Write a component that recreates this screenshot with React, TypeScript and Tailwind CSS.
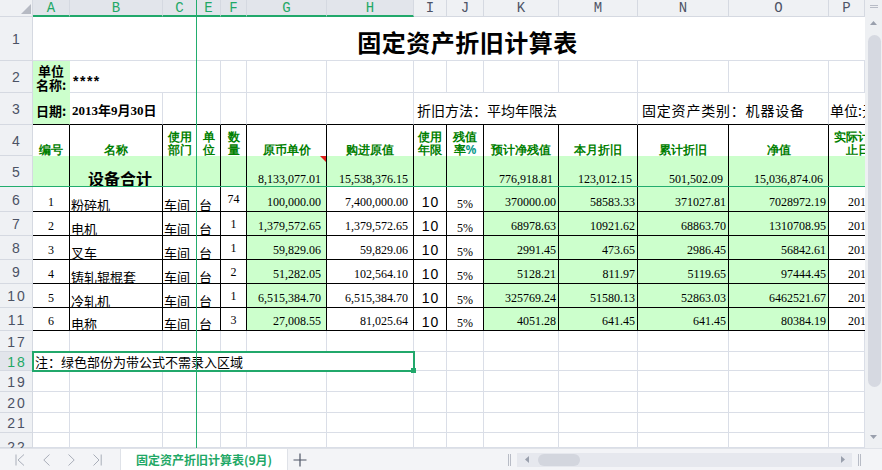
import React from 'react';

// grid line / table border presets
const G = 'border-r border-b border-[#dadee7]';
const B = 'border-r border-b border-black';
const GREEN = 'bg-[#ccffcc]';
const CJK = "font-['Noto_Sans_CJK_SC',sans-serif]";
const SERIF = "font-['Liberation_Serif','Noto_Sans_CJK_SC',serif]";
const NUM = `${SERIF} text-[12px] leading-none text-black`;
const HEAD = 'font-bold text-[#008000] text-[12px] leading-[13px]';

const letters = ['A', 'B', 'C', 'E', 'F', 'G', 'H', 'I', 'J', 'K', 'M', 'N', 'O', 'P'];
const selectedCols = ['A', 'B', 'C', 'E', 'F', 'G', 'H'];

const assets = [
  { no: '1', name: '粉碎机', qty: '74', price: '100,000.00', total: '7,400,000.00', resid: '370000.00', month: '58583.33', acc: '371027.81', net: '7028972.19' },
  { no: '2', name: '电机', qty: '1', price: '1,379,572.65', total: '1,379,572.65', resid: '68978.63', month: '10921.62', acc: '68863.70', net: '1310708.95' },
  { no: '3', name: '叉车', qty: '1', price: '59,829.06', total: '59,829.06', resid: '2991.45', month: '473.65', acc: '2986.45', net: '56842.61' },
  { no: '4', name: '铸轧辊棍套', qty: '2', price: '51,282.05', total: '102,564.10', resid: '5128.21', month: '811.97', acc: '5119.65', net: '97444.45' },
  { no: '5', name: '冷轧机', qty: '1', price: '6,515,384.70', total: '6,515,384.70', resid: '325769.24', month: '51580.13', acc: '52863.03', net: '6462521.67' },
  { no: '6', name: '电称', qty: '3', price: '27,008.55', total: '81,025.64', resid: '4051.28', month: '641.45', acc: '641.45', net: '80384.19' },
];

function ColHead({ l }: { l: string }) {
  const sel = selectedCols.includes(l);
  return (
    <div
      className={`flex items-center justify-center border-r border-[#d5d9e1] font-['Liberation_Mono',monospace] text-[14px] leading-none ${
        sel
          ? 'bg-[#e2e5eb] text-[#1fa866] border-b-2 border-b-[#21a86b]'
          : 'bg-[#eff1f4] text-[#4d5366] border-b border-b-[#d5d9e1]'
      }`}
    >
      {l}
    </div>
  );
}

function RowHead({ n, sel = false, top = false }: { n: string; sel?: boolean; top?: boolean }) {
  return (
    <div
      className={`flex justify-center border-r border-b border-[#d5d9e1] font-['Liberation_Sans',sans-serif] text-[14px] leading-none tracking-[2px] pl-[2px] ${
        top ? 'items-start pt-[7px]' : 'items-center pt-[1px]'
      } ${sel ? 'bg-[#e2e5eb] text-[#1fa866]' : 'bg-[#eff1f4] text-[#4b5264]'}`}
    >
      {n}
    </div>
  );
}

function EmptyRow({ n, top = false }: { n: string; top?: boolean }) {
  return (
    <>
      <RowHead n={n} top={top} />
      {letters.map((l) => (
        <div key={l} className={G} />
      ))}
    </>
  );
}

function Header2({ a, b, cls = '' }: { a: string; b: string; cls?: string }) {
  return (
    <div className={`border-r border-black flex flex-col items-center justify-end ${HEAD} ${cls}`}>
      <div>{a}</div>
      <div>{b}</div>
    </div>
  );
}

function Header1({ t }: { t: string }) {
  return <div className={`border-r border-black flex items-end justify-center ${HEAD}`}>{t}</div>;
}

function Sheet() {
  return (
    <div className="relative w-[865px] h-[448px] overflow-hidden bg-white">
      <div className="grid grid-cols-[33px_37px_93px_34px_24px_26px_80px_87px_33px_37px_75px_79px_91px_100px_36px] grid-rows-[17px_44px_32px_32px_31px_31px_25px_24px_24px_24px_24px_23px_21px_19px_21px_21px_20px_15px]">
        {/* column header */}
        <div className="relative bg-[#eff1f4] border-r border-b border-[#d5d9e1]">
          <svg className="absolute left-[21px] top-[4px]" width="10" height="10" viewBox="0 0 10 10">
            <polygon points="10,0 10,10 0,10" fill="#b6bac3" />
          </svg>
        </div>
        {letters.map((l) => (
          <ColHead key={l} l={l} />
        ))}

        {/* row 1 - title */}
        <RowHead n="1" />
        <div className={`col-span-14 border-b border-[#dadee7] flex items-end justify-center pl-[37px] pb-[6px] ${CJK} font-bold text-[24px] leading-none tracking-[0.5px] text-black`}>
          固定资产折旧计算表
        </div>

        {/* row 2 */}
        <RowHead n="2" />
        <div className={`${GREEN} border-r border-b border-transparent flex flex-col items-center justify-end ${CJK} font-bold text-[13px] leading-[14px]`}>
          <div>单位</div>
          <div>名称:</div>
        </div>
        <div className={`col-span-2 ${G} flex items-center pl-[3px] pt-[9px] font-['Liberation_Sans',sans-serif] font-bold text-[14px] leading-none tracking-[1.5px]`}>
          ****
        </div>
        {letters.slice(3).map((l) => (
          <div key={l} className={G} />
        ))}

        {/* row 3 */}
        <RowHead n="3" />
        <div className={`${GREEN} border-r border-b border-r-transparent border-b-black flex items-center justify-center pt-[4px] ${CJK} font-bold text-[13px] leading-none`}>
          日期:
        </div>
        <div className={`border-r border-b border-[#dadee7] border-b-black flex items-center pl-[2px] pt-[4px] ${SERIF} font-bold text-[13px] leading-none whitespace-nowrap`}>
          2013年9月30日
        </div>
        {['C', 'E', 'F', 'G', 'H'].map((l) => (
          <div key={l} className="border-r border-b border-[#dadee7] border-b-black" />
        ))}
        <div className={`col-span-4 border-r border-b border-[#dadee7] border-b-black flex items-center pl-[3px] pt-[3px] ${CJK} text-[14px] leading-none whitespace-nowrap`}>
          折旧方法：平均年限法
        </div>
        <div className={`col-span-2 border-r border-b border-[#dadee7] border-b-black flex items-center pl-[4px] pt-[3px] ${CJK} text-[14px] leading-none tracking-[0.8px] whitespace-nowrap`}>
          固定资产类别：机器设备
        </div>
        <div className={`border-b border-black flex items-center pl-[1px] pt-[3px] ${CJK} text-[14px] leading-none whitespace-nowrap overflow-hidden`}>
          单位:元
        </div>

        {/* row 4 - headings */}
        <RowHead n="4" />
        <Header1 t="编号" />
        <Header1 t="名称" />
        <Header2 a="使用" b="部门" />
        <Header2 a="单" b="位" />
        <Header2 a="数" b="量" />
        <Header1 t="原币单价" />
        <Header1 t="购进原值" />
        <Header2 a="使用" b="年限" />
        <div className={`border-r border-black flex flex-col items-center justify-end ${HEAD}`}>
          <div>残值</div>
          <div>
            率<span className="text-[#0a9a8a]">%</span>
          </div>
        </div>
        <Header1 t="预计净残值" />
        <Header1 t="本月折旧" />
        <Header1 t="累计折旧" />
        <Header1 t="净值" />
        <div className="overflow-hidden">
          <div className={`w-[58px] h-full flex flex-col items-center justify-end ${HEAD}`}>
            <div className="whitespace-nowrap">实际计提</div>
            <div className="whitespace-nowrap">止日</div>
          </div>
        </div>

        {/* row 5 - totals */}
        <RowHead n="5" />
        <div className={`${B} ${GREEN}`} />
        <div className={`${B} ${GREEN} flex items-end justify-center pl-[8px] ${CJK} font-bold text-[16px] leading-none`}>设备合计</div>
        <div className={`${B} ${GREEN}`} />
        <div className={`${B} ${GREEN}`} />
        <div className={`${B} ${GREEN}`} />
        <div className={`${B} ${GREEN} relative flex items-end justify-end pr-[5px] pb-[1px] ${NUM}`}>
          8,133,077.01
          <svg className="absolute right-0 top-0" width="6" height="6" viewBox="0 0 6 6">
            <polygon points="0,0 6,0 6,6" fill="#e0201c" />
          </svg>
        </div>
        <div className={`${B} ${GREEN} flex items-end justify-end pr-[5px] pb-[1px] ${NUM}`}>15,538,376.15</div>
        <div className={`${B} ${GREEN}`} />
        <div className={`${B} ${GREEN}`} />
        <div className={`${B} ${GREEN} flex items-end justify-end pr-[5px] pb-[1px] ${NUM}`}>776,918.81</div>
        <div className={`${B} ${GREEN} flex items-end justify-end pr-[5px] pb-[1px] ${NUM}`}>123,012.15</div>
        <div className={`${B} ${GREEN} flex items-end justify-end pr-[5px] pb-[1px] ${NUM}`}>501,502.09</div>
        <div className={`${B} ${GREEN} flex items-end justify-end pr-[5px] pb-[1px] ${NUM}`}>15,036,874.06</div>
        <div className={`border-b border-black ${GREEN}`} />

        {/* rows 6-11 - assets */}
        {assets.map((r, i) => (
          <React.Fragment key={r.no}>
            <RowHead n={String(6 + i)} />
            <div className={`${B} flex items-end justify-center pb-[3px] ${NUM}`}>{r.no}</div>
            <div className={`${B} flex items-end pl-[1px] ${CJK} text-[13px] leading-none whitespace-nowrap`}>{r.name}</div>
            <div className={`${B} flex items-end pl-[1px] ${CJK} text-[13px] leading-none`}>车间</div>
            <div className={`${B} flex items-end pl-[2px] ${CJK} text-[13px] leading-none`}>台</div>
            <div className={`${B} flex items-start justify-center pt-[6px] ${NUM}`}>{r.qty}</div>
            <div className={`${B} ${GREEN} flex items-end justify-end pr-[5px] pb-[3px] ${NUM}`}>{r.price}</div>
            <div className={`${B} flex items-end justify-end pr-[5px] pb-[3px] ${NUM}`}>{r.total}</div>
            <div className={`${B} flex items-center justify-center pt-[5px] font-['Liberation_Sans',sans-serif] text-[14px] leading-none tracking-[1px] pl-[1px]`}>10</div>
            <div className={`${B} flex items-end justify-center pb-[1px] ${NUM}`}>5%</div>
            <div className={`${B} ${GREEN} flex items-end justify-end pr-[2px] pb-[3px] ${NUM}`}>{r.resid}</div>
            <div className={`${B} ${GREEN} flex items-end justify-end pr-[2px] pb-[3px] ${NUM}`}>{r.month}</div>
            <div className={`${B} ${GREEN} flex items-end justify-end pr-[2px] pb-[3px] ${NUM}`}>{r.acc}</div>
            <div className={`${B} ${GREEN} flex items-end justify-end pr-[2px] pb-[3px] ${NUM}`}>{r.net}</div>
            <div className={`border-b border-black flex items-end overflow-hidden whitespace-nowrap pl-[19px] pb-[3px] ${NUM}`}>2013-09-30</div>
          </React.Fragment>
        ))}

        <EmptyRow n="17" />

        {/* row 18 - note, selected */}
        <RowHead n="18" sel />
        <div className={`col-span-7 ${G} relative flex items-center pl-[2px] pt-[1px] ${CJK} text-[13px] leading-none whitespace-nowrap`}>
          注：绿色部份为带公式不需录入区域
          <div className="absolute left-[-1px] top-[-1px] right-[-2px] bottom-[-2px] border-2 border-[#21a86b]">
            <div className="absolute right-[-3px] bottom-[-3px] w-[5px] h-[5px] bg-[#21a86b]" />
          </div>
        </div>
        {letters.slice(7).map((l) => (
          <div key={l} className={G} />
        ))}

        <EmptyRow n="19" />
        <EmptyRow n="20" />
        <EmptyRow n="21" />
        <EmptyRow n="22" top />
      </div>

      {/* frozen pane lines */}
      <div className="absolute left-[196px] top-0 bottom-0 w-px bg-[#22ad6e]" />
      <div className="absolute top-[186px] left-0 right-0 h-px bg-[#22ad6e]" />
    </div>
  );
}

function VScroll() {
  return (
    <div className="w-[17px] h-[448px] bg-[#eef0f3] flex flex-col items-center">
      <div className="mt-[5px] w-[8px] h-px bg-[#b8bcc6]" />
      <div className="mt-[1px] w-[8px] h-px bg-[#b8bcc6]" />
      <svg className="mt-[13px]" width="7" height="4" viewBox="0 0 7 4">
        <polygon points="3.5,0 7,4 0,4" fill="#9aa0ad" />
      </svg>
      <div className="mt-[10px] ml-[2px] w-[13px] h-[352px] rounded-full bg-[#d6d9e1]" />
      <svg className="mt-[48px]" width="7" height="4" viewBox="0 0 7 4">
        <polygon points="0,0 7,0 3.5,4" fill="#9aa0ad" />
      </svg>
    </div>
  );
}

function TabBar() {
  const nav = 'stroke-[#a9aeb9]';
  return (
    <div className="h-[22px] bg-[#f3f4f7] border-t border-[#dfe2e8] flex items-stretch">
      <div className="flex items-center">
        <svg className="ml-[15px]" width="10" height="12" viewBox="0 0 10 12" fill="none">
          <path d="M1 0.5V11.5M9 0.5L3 6L9 11.5" className={nav} strokeWidth="1" />
        </svg>
        <svg className="ml-[18px]" width="7" height="12" viewBox="0 0 7 12" fill="none">
          <path d="M6.5 0.5L0.8 6L6.5 11.5" className={nav} strokeWidth="1" />
        </svg>
        <svg className="ml-[18px]" width="7" height="12" viewBox="0 0 7 12" fill="none">
          <path d="M0.5 0.5L6.2 6L0.5 11.5" className={nav} strokeWidth="1" />
        </svg>
        <svg className="ml-[18px]" width="9" height="12" viewBox="0 0 9 12" fill="none">
          <path d="M0.5 0.5L6 6L0.5 11.5M8.2 0.5V11.5" className={nav} strokeWidth="1" />
        </svg>
      </div>
      <div className={`ml-[18px] w-[168px] bg-white border-x border-[#dfe2e8] flex items-center justify-center ${CJK} font-bold text-[12px] leading-none text-[#1fa866] whitespace-nowrap`}>
        固定资产折旧计算表(9月)
      </div>
      <div className="flex items-center">
        <svg className="ml-[5px]" width="14" height="14" viewBox="0 0 14 14" fill="none">
          <path d="M7 0.5V13.5M0.5 7H13.5" stroke="#4f5566" strokeWidth="1.2" />
        </svg>
        <div className="ml-[201px] w-[3px] h-[12px] border-x border-[#b8bcc6]" />
        <div className="ml-[6px] w-[335px] h-[14px] bg-[#e6e8ee] flex items-center">
          <svg className="ml-[8px]" width="4" height="7" viewBox="0 0 4 7">
            <polygon points="0,3.5 4,0 4,7" fill="#9aa0ad" />
          </svg>
          <div className="ml-[9px] w-[42px] h-[12px] rounded-full bg-[#d3d6de]" />
          <div className="flex-1" />
          <svg className="mr-[7px]" width="4" height="7" viewBox="0 0 4 7">
            <polygon points="0,0 4,3.5 0,7" fill="#9aa0ad" />
          </svg>
        </div>
        <div className="ml-[6px] w-[3px] h-[12px] border-x border-[#b8bcc6]" />
      </div>
    </div>
  );
}

export default function App() {
  return (
    <div className="w-[882px] h-[470px] overflow-hidden bg-white flex flex-col text-black">
      <div className="flex">
        <Sheet />
        <VScroll />
      </div>
      <TabBar />
    </div>
  );
}
